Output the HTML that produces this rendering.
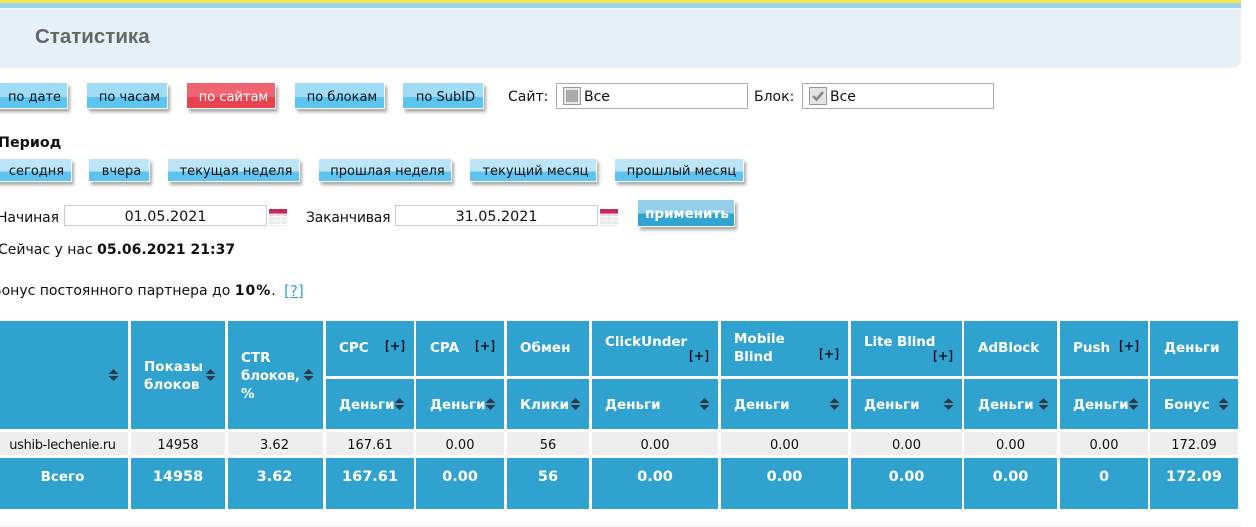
<!DOCTYPE html>
<html lang="ru"><head><meta charset="utf-8"><title>Статистика</title>
<style>
html,body{margin:0;padding:0;background:#fff}
body{position:relative;width:1256px;height:527px;overflow:hidden;font-family:"DejaVu Sans","Liberation Sans",sans-serif;font-size:13px;color:#111}
div,span,a,svg{position:absolute;white-space:nowrap;box-sizing:border-box}
b{position:static}
.b{height:26px;top:83px;background:linear-gradient(#9fdcf5 0,#9fdcf5 57%,#5cc4ef 57%,#5cc4ef 100%);border-right:1px solid #fff;border-bottom:1px solid #fff;box-shadow:2px 3px 3px #aaa;text-align:center;line-height:29px;color:#111;padding-left:5px}
.r{background:linear-gradient(#ee6470 0,#ee6470 57%,#e84250 57%,#e84250 100%);color:#fff}
.p{height:23px;top:159px;background:linear-gradient(#bce6f7 0,#bce6f7 57%,#5cc4ef 57%,#5cc4ef 100%);border-right:1px solid #fff;border-bottom:1px solid #fff;box-shadow:2px 3px 3px #aaa;text-align:center;line-height:25px;padding-left:5px}
.in{border:1px solid #aaa;top:83px;height:26px;width:192px;background:#fff}
.d{border:1px solid #ccc;top:205px;height:21px;width:203px;text-align:center;line-height:22px;font-size:14.3px}
.l{line-height:18px;height:18px}
.c{background:#2fa2d0}
.g{background:#eee}
.h{color:#fff;font-weight:bold;line-height:18px;height:18px;font-size:13.5px;margin-top:-1px}
.v{text-align:center;line-height:18px;height:18px;top:437px;font-size:13px}
.w{text-align:center;line-height:20px;height:20px;top:467px;color:#fff;font-weight:bold;font-size:14.5px}
.pl{font-size:12px;line-height:14px;height:14px;color:#000;letter-spacing:.3px;-webkit-text-stroke:.25px #000}
.s{width:11px;height:12px}
</style></head><body>
<svg width="0" height="0" style="position:absolute"><defs><symbol id="so" viewBox="0 0 11 12"><path d="M5.5 0L10.5 5H.5zM.5 7h10l-5 5z" fill="#2d3a44"/></symbol><symbol id="cal" viewBox="0 0 18 17"><rect x="0" y="0" width="18" height="4.500" fill="#c2275f"/><rect x="0" y="4.500" width="18" height="3" fill="#f4d0de"/><rect x="0" y="7.500" width="18" height="9.500" fill="#e6ece6"/><path d="M0 7.500h18M0 11.500h18M0 15.500h18M6 5v12M12 5v12" stroke="#fff" stroke-width="1"/></symbol></defs></svg>

<div style="left:0;top:0;width:1241px;height:3px;background:#f4e64e"></div>
<div style="left:0;top:3px;width:1241px;height:5px;background:#9ad2e7"></div>
<div style="left:0;top:9px;width:1241px;height:59px;background:#e6f1f7;border-bottom-right-radius:8px"></div>
<div style="left:35px;top:25px;font:bold 20.5px/24px 'Liberation Sans',sans-serif;color:#666">Статистика</div>

<div class="b" style="left:-10px;width:78px;padding-left:12px">по дате</div>
<div class="b" style="left:87px;width:81px">по часам</div>
<div class="b r" style="left:187px;width:89px">по сайтам</div>
<div class="b" style="left:295px;width:90px">по блокам</div>
<div class="b" style="left:403px;width:81px">по SubID</div>

<div class="l" style="left:508px;top:88px;font-size:14px">Сайт:</div>
<div class="in" style="left:556px"></div>
<div style="left:563px;top:87px;width:18px;height:18px;border:1px solid #999;background:#e8e8e8"></div>
<div style="left:566px;top:90px;width:12px;height:12px;background:#aaa"></div>
<div class="l" style="left:584px;top:88px;font-size:14px">Все</div>
<div class="l" style="left:754px;top:88px;font-size:14px">Блок:</div>
<div class="in" style="left:802px"></div>
<div style="left:809px;top:87px;width:18px;height:18px;border:1px solid #999;background:#e4e4e4"></div>
<svg style="left:811px;top:90px" width="14" height="12" viewBox="0 0 14 12"><path d="M2 6l3.500 3.500L12 2" fill="none" stroke="#888" stroke-width="2.500"/></svg>
<div class="l" style="left:830px;top:88px;font-size:14px">Все</div>

<div class="l" style="left:-2px;top:134px;font-size:14.3px;font-weight:bold">Период</div>
<div class="p" style="left:-10px;width:82px;padding-left:12px">сегодня</div>
<div class="p" style="left:89px;width:61px">вчера</div>
<div class="p" style="left:168px;width:132px">текущая неделя</div>
<div class="p" style="left:319px;width:133px">прошлая неделя</div>
<div class="p" style="left:470px;width:127px">текущий месяц</div>
<div class="p" style="left:615px;width:129px">прошлый месяц</div>

<div class="l" style="left:-3px;top:209px;font-size:14px;letter-spacing:-.1px">Начиная</div>
<div class="d" style="left:64px">01.05.2021</div>
<svg style="left:269px;top:209px" width="18" height="17"><use href="#cal"/></svg>
<div class="l" style="left:306px;top:209px;font-size:14px;letter-spacing:-.2px">Заканчивая</div>
<div class="d" style="left:395px">31.05.2021</div>
<svg style="left:600px;top:209px" width="18" height="17"><use href="#cal"/></svg>
<div style="left:638px;top:200px;width:97px;height:27px;background:linear-gradient(#93cfe8 0,#93cfe8 52%,#31a4d2 52%,#31a4d2 100%);border-right:1px solid #fff;border-bottom:1px solid #fff;box-shadow:2px 3px 3px #aaa;color:#fff;font-weight:bold;text-align:center;line-height:28px;font-size:13.5px;padding-left:2px">применить</div>

<div class="l" style="left:-2px;top:241px;font-size:14px">Сейчас у нас <b>05.06.2021 21:37</b></div>
<div class="l" style="left:-8px;top:282px;font-size:14px">Бонус постоянного партнера до <b style="letter-spacing:1px">10%</b>.</div>
<a class="l" style="left:284px;top:282px;font-size:15px;color:#2fa2d0;text-decoration:underline">[?]</a>

<!-- header cells -->
<div class="c" style="left:0;top:321px;width:128px;height:108px"></div>
<div class="c" style="left:131px;top:321px;width:94px;height:108px"></div>
<div class="c" style="left:228px;top:321px;width:95px;height:108px"></div>
<div class="c" style="left:326px;top:321px;width:88px;height:55px"></div>
<div class="c" style="left:416px;top:321px;width:88px;height:55px"></div>
<div class="c" style="left:507px;top:321px;width:82px;height:55px"></div>
<div class="c" style="left:592px;top:321px;width:126px;height:55px"></div>
<div class="c" style="left:721px;top:321px;width:127px;height:55px"></div>
<div class="c" style="left:851px;top:321px;width:111px;height:55px"></div>
<div class="c" style="left:964px;top:321px;width:93px;height:55px"></div>
<div class="c" style="left:1060px;top:321px;width:88px;height:55px"></div>
<div class="c" style="left:1150px;top:321px;width:88px;height:55px"></div>

<div class="c" style="left:326px;top:379px;width:88px;height:50px"></div>
<div class="c" style="left:416px;top:379px;width:88px;height:50px"></div>
<div class="c" style="left:507px;top:379px;width:82px;height:50px"></div>
<div class="c" style="left:592px;top:379px;width:126px;height:50px"></div>
<div class="c" style="left:721px;top:379px;width:127px;height:50px"></div>
<div class="c" style="left:851px;top:379px;width:111px;height:50px"></div>
<div class="c" style="left:964px;top:379px;width:93px;height:50px"></div>
<div class="c" style="left:1060px;top:379px;width:88px;height:50px"></div>
<div class="c" style="left:1150px;top:379px;width:88px;height:50px"></div>

<!-- data row -->
<div class="g" style="left:0;top:432px;width:128px;height:23px"></div>
<div class="g" style="left:131px;top:432px;width:94px;height:23px"></div>
<div class="g" style="left:228px;top:432px;width:95px;height:23px"></div>
<div class="g" style="left:326px;top:432px;width:88px;height:23px"></div>
<div class="g" style="left:416px;top:432px;width:88px;height:23px"></div>
<div class="g" style="left:507px;top:432px;width:82px;height:23px"></div>
<div class="g" style="left:592px;top:432px;width:126px;height:23px"></div>
<div class="g" style="left:721px;top:432px;width:127px;height:23px"></div>
<div class="g" style="left:851px;top:432px;width:111px;height:23px"></div>
<div class="g" style="left:964px;top:432px;width:93px;height:23px"></div>
<div class="g" style="left:1060px;top:432px;width:88px;height:23px"></div>
<div class="g" style="left:1150px;top:432px;width:88px;height:23px"></div>

<!-- total row -->
<div class="c" style="left:0;top:458px;width:128px;height:51px"></div>
<div class="c" style="left:131px;top:458px;width:94px;height:51px"></div>
<div class="c" style="left:228px;top:458px;width:95px;height:51px"></div>
<div class="c" style="left:326px;top:458px;width:88px;height:51px"></div>
<div class="c" style="left:416px;top:458px;width:88px;height:51px"></div>
<div class="c" style="left:507px;top:458px;width:82px;height:51px"></div>
<div class="c" style="left:592px;top:458px;width:126px;height:51px"></div>
<div class="c" style="left:721px;top:458px;width:127px;height:51px"></div>
<div class="c" style="left:851px;top:458px;width:111px;height:51px"></div>
<div class="c" style="left:964px;top:458px;width:93px;height:51px"></div>
<div class="c" style="left:1060px;top:458px;width:88px;height:51px"></div>
<div class="c" style="left:1150px;top:458px;width:88px;height:51px"></div>

<!-- header labels -->
<div class="h" style="left:144px;top:359px">Показы</div>
<div class="h" style="left:144px;top:377px">блоков</div>
<div class="h" style="left:241px;top:350px">CTR</div>
<div class="h" style="left:241px;top:368px;letter-spacing:-.3px">блоков,</div>
<div class="h" style="left:241px;top:386px">%</div>
<div class="h" style="left:339px;top:340px">CPC</div>
<div class="h" style="left:430px;top:340px">CPA</div>
<div class="h" style="left:520px;top:340px">Обмен</div>
<div class="h" style="left:605px;top:334px">ClickUnder</div>
<div class="h" style="left:734px;top:331px">Mobile</div>
<div class="h" style="left:734px;top:349px">Blind</div>
<div class="h" style="left:864px;top:334px;letter-spacing:-.1px">Lite Blind</div>
<div class="h" style="left:978px;top:340px">AdBlock</div>
<div class="h" style="left:1073px;top:340px">Push</div>
<div class="h" style="left:1164px;top:340px">Деньги</div>

<div class="pl" style="left:385px;top:339px">[+]</div>
<div class="pl" style="left:475px;top:339px">[+]</div>
<div class="pl" style="left:689px;top:349px">[+]</div>
<div class="pl" style="left:819px;top:347px">[+]</div>
<div class="pl" style="left:933px;top:349px">[+]</div>
<div class="pl" style="left:1119px;top:339px">[+]</div>

<div class="h" style="left:339px;top:397px">Деньги</div>
<div class="h" style="left:430px;top:397px">Деньги</div>
<div class="h" style="left:520px;top:397px">Клики</div>
<div class="h" style="left:605px;top:397px">Деньги</div>
<div class="h" style="left:734px;top:397px">Деньги</div>
<div class="h" style="left:864px;top:397px">Деньги</div>
<div class="h" style="left:978px;top:397px">Деньги</div>
<div class="h" style="left:1073px;top:397px">Деньги</div>
<div class="h" style="left:1164px;top:397px">Бонус</div>

<!-- sort icons -->
<svg class="s" style="left:108px;top:369px"><use href="#so"/></svg>
<svg class="s" style="left:205px;top:369px"><use href="#so"/></svg>
<svg class="s" style="left:303px;top:369px"><use href="#so"/></svg>
<svg class="s" style="left:394px;top:398px"><use href="#so"/></svg>
<svg class="s" style="left:485px;top:398px"><use href="#so"/></svg>
<svg class="s" style="left:570px;top:398px"><use href="#so"/></svg>
<svg class="s" style="left:699px;top:398px"><use href="#so"/></svg>
<svg class="s" style="left:829px;top:398px"><use href="#so"/></svg>
<svg class="s" style="left:943px;top:398px"><use href="#so"/></svg>
<svg class="s" style="left:1038px;top:398px"><use href="#so"/></svg>
<svg class="s" style="left:1128px;top:398px"><use href="#so"/></svg>
<svg class="s" style="left:1218px;top:398px"><use href="#so"/></svg>

<!-- data values -->
<div class="v" style="left:-3px;width:131px;letter-spacing:-.35px">ushib-lechenie.ru</div>
<div class="v" style="left:131px;width:94px">14958</div>
<div class="v" style="left:228px;width:93px">3.62</div>
<div class="v" style="left:326px;width:88px">167.61</div>
<div class="v" style="left:416px;width:88px">0.00</div>
<div class="v" style="left:507px;width:82px">56</div>
<div class="v" style="left:592px;width:126px">0.00</div>
<div class="v" style="left:721px;width:127px">0.00</div>
<div class="v" style="left:851px;width:111px">0.00</div>
<div class="v" style="left:964px;width:93px">0.00</div>
<div class="v" style="left:1060px;width:88px">0.00</div>
<div class="v" style="left:1150px;width:88px">172.09</div>

<div class="w" style="left:-3px;width:131px;font-size:13.5px">Всего</div>
<div class="w" style="left:131px;width:94px">14958</div>
<div class="w" style="left:228px;width:93px">3.62</div>
<div class="w" style="left:326px;width:88px">167.61</div>
<div class="w" style="left:416px;width:88px">0.00</div>
<div class="w" style="left:507px;width:82px">56</div>
<div class="w" style="left:592px;width:126px">0.00</div>
<div class="w" style="left:721px;width:127px">0.00</div>
<div class="w" style="left:851px;width:111px">0.00</div>
<div class="w" style="left:964px;width:93px">0.00</div>
<div class="w" style="left:1060px;width:88px">0</div>
<div class="w" style="left:1150px;width:88px">172.09</div>

<div style="left:0;top:526px;width:1241px;height:1px;background:#eee"></div>
</body></html>
